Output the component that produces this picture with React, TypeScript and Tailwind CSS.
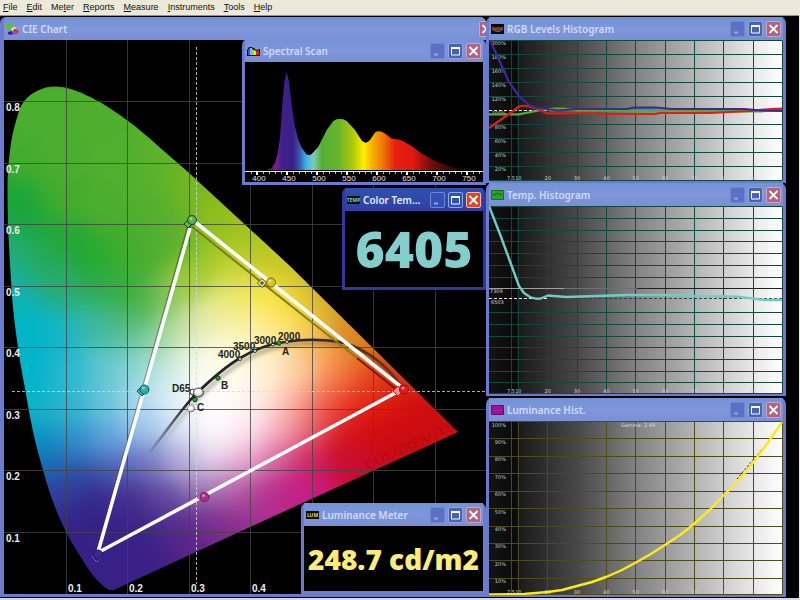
import type { ReactNode } from "react";

type WindowProps = {
  title: string;
  icon: ReactNode;
  active?: boolean;
  tucked?: boolean;
  className?: string;
  children: ReactNode;
};

type ButtonsProps = {
  active?: boolean;
  closeOnly?: boolean;
};

const WindowButtons = ({ active, closeOnly }: ButtonsProps) => {
  return (
    <div className="flex shrink-0 gap-[3px]">
      {!closeOnly && (
        <>
          <button
            aria-label="Minimize"
            className={`flex h-4 w-[15px] rounded-xs border ${
              active
                ? "border-[#6f88d4] bg-[#3150b4]"
                : "border-[#6f86ce] bg-[#5b72c4]"
            }`}
          >
            <svg viewBox="0 0 13 14" className="h-full w-full">
              <path d="M3 10.5h4" stroke="#8fa9ee" strokeWidth="2" />
            </svg>
          </button>
          <button
            aria-label="Maximize"
            className={`flex h-4 w-[15px] rounded-xs border ${
              active
                ? "border-[#8fa6e6] bg-[#3150b4]"
                : "border-[#8ea4de] bg-[#4a62b2]"
            }`}
          >
            <svg viewBox="0 0 13 14" className="h-full w-full">
              <path d="M2.5 4v7h8V4z" fill="none" stroke="#fff" />
              <path d="M2 4h9" stroke="#fff" strokeWidth="2" />
            </svg>
          </button>
        </>
      )}
      <button
        aria-label="Close"
        className={`flex h-4 w-[15px] rounded-xs border ${
          active
            ? "border-[#f0b8a8] bg-[#dc4528]"
            : "border-[#c9a4c4] bg-[#b06480]"
        }`}
      >
        <svg viewBox="0 0 13 14" className="h-full w-full">
          <path d="M2.5 3l8 8M10.5 3l-8 8" stroke="#fff" strokeWidth="1.8" />
        </svg>
      </button>
    </div>
  );
};

const Window = ({
  title,
  icon,
  active,
  tucked,
  className,
  children,
}: WindowProps) => {
  return (
    <section
      className={`flex flex-col rounded-t-md ${
        tucked ? "overflow-hidden border-l-4" : "border-x-3"
      } ${
        active
          ? "border-[#3038a0] bg-[#3038a0]"
          : "border-[#6a7ccb] bg-[#6a7ccb]"
      } ${className ?? ""}`}
    >
      <header
        className={`flex h-[23px] shrink-0 items-center gap-[3px] px-0.5 pt-px ${
          tucked ? "-mr-2.5" : ""
        } ${
          active
            ? "bg-linear-to-b from-[#2c50b0] via-[#3049a8] to-[#2f3f9e]"
            : "bg-linear-to-b from-[#7392d6] via-[#7f96da] to-[#7990d6]"
        }`}
      >
        {icon}
        <h2
          className={`min-w-0 flex-1 font-['Noto_Sans','Open_Sans',sans-serif] text-[10px] leading-4 font-semibold whitespace-nowrap ${
            active ? "text-[#e4ecfa]" : "text-[#cfdcf6]"
          }`}
        >
          {title}
        </h2>
        <WindowButtons active={active} closeOnly={tucked} />
      </header>
      {children}
    </section>
  );
};

const iconClass = "h-[11px] w-[13px] shrink-0";

const CieIcon = () => (
  <svg viewBox="0 0 13 11" className={iconClass}>
    <path d="M0 0h5l3 4-3 3L0 4z" fill="#5cc434" />
    <path d="M5 5l4-2 1 3-3 1z" fill="#fff" />
    <path d="M8 4l5 3.500-2 2-4-2.500z" fill="#e62a1c" />
    <path d="M2 8l4-1 1 3-3 1-2-1z" fill="#2c22a0" />
    <path d="M6 8l5 1-5 2z" fill="#b0309c" />
    <path d="M7 2l3 2-2 1z" fill="#f5ea40" />
  </svg>
);

const SpectralIcon = () => (
  <svg viewBox="0 0 13 11" className={iconClass}>
    <path d="M0 10V4l2-3h2l3 1 2 2 4-1v7z" fill="#101010" />
    <path d="M1 9V4l2-2v7z" fill="#6a3fc0" />
    <path d="M3 9V2h2v7z" fill="#5cc8e8" />
    <path d="M5 9V3l2 1v5z" fill="#8ed84c" />
    <path d="M7 9V4l2 1v4z" fill="#f6e234" />
    <path d="M9 9V5l3-1v5z" fill="#e02414" />
  </svg>
);

const RgbIcon = () => (
  <svg viewBox="0 0 13 11" className={iconClass}>
    <path d="M0 0h13v10H0z" fill="#0a0a0a" />
    <path d="M1 6q6-5 11 0" stroke="#4838c0" strokeWidth="1.500" fill="none" />
    <path d="M1 3q6 5 11 0" stroke="#e02818" strokeWidth="1.500" fill="none" />
    <path d="M1 5q6 5 11 0" stroke="#4fb02c" fill="none" />
  </svg>
);

const TempHistIcon = () => (
  <svg viewBox="0 0 13 11" className={iconClass}>
    <path d="M.5 .5h12v9H.5z" fill="#2aa428" stroke="#147014" />
    <path d="M2 5q4-3 9 0" stroke="#0e5c10" fill="none" />
  </svg>
);

const LumHistIcon = () => (
  <svg viewBox="0 0 13 11" className={iconClass}>
    <path d="M.5 .5h12v9H.5z" fill="#9c1296" stroke="#5e1068" />
    <path d="M1 8l4-3 3 1 4-4" stroke="#b0208c" fill="none" />
  </svg>
);

const TagIcon = ({ label, fill }: { label: string; fill: string }) => (
  <svg viewBox="0 0 13 11" className={iconClass}>
    <path d="M0 1h13v8H0z" fill="#0a0a0a" />
    <text x="6.5" y="7" fontSize="5" fontWeight="700" textAnchor="middle" fill={fill}>
      {label}
    </text>
  </svg>
);

// [x, y, r, g, b] anchors of the chromaticity fill
const anchors = [
  [20, 110, 76, 174, 46], [55, 95, 76, 174, 46], [100, 115, 78, 174, 46],
  [60, 150, 76, 174, 46], [20, 160, 66, 172, 46], [120, 160, 80, 175, 46],
  [160, 160, 92, 178, 42], [190, 185, 118, 182, 34], [12, 200, 24, 166, 58],
  [60, 200, 68, 172, 44], [110, 210, 76, 174, 46], [155, 205, 84, 176, 44],
  [220, 215, 142, 190, 28], [182, 240, 92, 176, 44], [30, 220, 26, 166, 60],
  [60, 240, 34, 168, 54], [90, 260, 34, 168, 50], [120, 250, 62, 172, 46],
  [150, 255, 78, 174, 48], [12, 250, 34, 172, 124], [40, 260, 36, 170, 96],
  [60, 285, 40, 172, 116], [15, 290, 18, 178, 178], [100, 290, 48, 172, 84],
  [130, 290, 54, 174, 56], [140, 310, 72, 178, 70], [165, 300, 132, 196, 92],
  [190, 280, 164, 204, 60], [210, 250, 158, 198, 36], [245, 240, 166, 196, 30],
  [235, 270, 206, 214, 56], [270, 260, 194, 198, 36], [300, 282, 202, 190, 40],
  [25, 330, 0, 180, 200], [60, 330, 18, 182, 198], [95, 325, 60, 184, 160],
  [125, 330, 84, 188, 146], [150, 340, 136, 208, 164], [175, 330, 192, 222, 166],
  [205, 320, 232, 236, 172], [230, 305, 238, 234, 130], [260, 295, 248, 232, 78],
  [285, 300, 252, 228, 60], [310, 320, 248, 206, 58], [325, 305, 204, 168, 40],
  [350, 328, 206, 140, 32], [250, 330, 253, 243, 166], [285, 330, 253, 230, 132],
  [30, 370, 0, 180, 202], [70, 370, 40, 184, 208], [105, 365, 96, 198, 206],
  [135, 370, 140, 212, 214], [165, 370, 200, 232, 228], [195, 360, 242, 247, 230],
  [225, 350, 254, 250, 218], [320, 350, 248, 180, 100], [345, 350, 242, 136, 50],
  [370, 350, 212, 112, 26], [395, 372, 206, 74, 22], [255, 375, 255, 246, 222],
  [270, 365, 254, 236, 200],
  [300, 370, 252, 206, 160], [335, 380, 244, 124, 80], [365, 380, 232, 74, 32],
  [385, 390, 224, 36, 20], [35, 410, 14, 178, 200], [70, 410, 50, 180, 206],
  [105, 405, 104, 196, 220], [140, 405, 172, 218, 238], [170, 400, 224, 240, 250],
  [200, 395, 255, 255, 255], [218, 372, 255, 254, 240], [225, 410, 255, 252, 252],
  [205, 418, 255, 252, 254],
  [235, 385, 255, 252, 244], [240, 412, 255, 244, 246],
  [270, 400, 253, 224, 216], [300, 405, 248, 164, 144], [330, 410, 236, 74, 56],
  [360, 410, 226, 26, 18], [400, 405, 212, 14, 14], [430, 420, 204, 12, 14],
  [452, 431, 206, 14, 16], [40, 445, 8, 142, 196], [75, 440, 46, 140, 204],
  [110, 440, 98, 162, 220], [145, 430, 158, 194, 234], [180, 425, 214, 226, 246],
  [215, 435, 253, 246, 252], [250, 430, 252, 222, 236], [285, 430, 246, 168, 184],
  [315, 430, 230, 80, 98], [345, 440, 208, 14, 24], [380, 440, 204, 12, 16],
  [400, 450, 202, 12, 20], [45, 470, 26, 98, 176], [75, 475, 44, 84, 172],
  [110, 470, 72, 92, 180], [145, 465, 112, 112, 190], [180, 460, 176, 170, 216],
  [210, 460, 228, 212, 236], [245, 460, 236, 176, 212], [275, 460, 216, 112, 164],
  [305, 460, 206, 40, 96], [340, 465, 202, 12, 50], [365, 470, 202, 12, 52],
  [55, 500, 52, 54, 148], [90, 495, 52, 34, 136], [130, 500, 66, 42, 140],
  [165, 500, 98, 74, 158], [200, 490, 152, 118, 184], [230, 490, 184, 110, 176],
  [260, 490, 178, 64, 150], [290, 490, 192, 30, 132], [315, 485, 202, 26, 130],
  [75, 535, 54, 32, 134], [110, 540, 56, 32, 136], [145, 530, 58, 34, 136],
  [180, 525, 84, 42, 140], [215, 520, 126, 50, 144], [250, 515, 160, 50, 144],
  [280, 505, 184, 40, 142], [105, 575, 56, 32, 134], [150, 565, 60, 32, 134],
  [190, 548, 88, 34, 136], [225, 535, 124, 38, 140],
];

const mixColor = (x: number, y: number) => {
  let r = 0,
    g = 0,
    b = 0,
    total = 0;
  for (const [ax, ay, ar, ag, ab] of anchors) {
    const d2 = (x - ax) ** 2 + (y - ay) ** 2;
    const w = Math.exp(-d2 / 420) + 1e-4 / (1 + d2);
    r += ar * w;
    g += ag * w;
    b += ab * w;
    total += w;
  }
  return `rgb(${Math.round(r / total)},${Math.round(g / total)},${Math.round(b / total)})`;
};

const CELL = 8;
const cells: { x: number; y: number; fill: string }[] = [];
for (let y = 76; y < 604; y += CELL) {
  for (let x = -8; x < 472; x += CELL) {
    cells.push({ x, y, fill: mixColor(x + CELL / 2, y + CELL / 2) });
  }
}

const locus =
  "M7.5 190C7.5 170 9 158 11 143C13 131 15 124 20 108C25 98 31 94 37 91C44 87 51 86 57 86.500C61 87 64 87 67 88C82 92 90 97 100 102C110 108 120 115 128 121C138 128 148 137 157 145C167 154 178 163 188 172L290 266L458 432L250 527L118 588C114 591 110 591 106 588C100 584 93 576 87 567C80 556 73 545 66 532C56 512 49 492 43 470C36 447 31 424 27 400C24 382 20 364 18 347C14 320 12 300 11 280C9 250 7.500 220 7.5 190Z";

const bodyCurve =
  "M149 453C163 436 176 416 193 397C207 383 224 367 242 357C254 350 268 344 285 342C303 339 325 339 345 343C366 350 386 364 401 386";

const axis = [0.1, 0.2, 0.3, 0.4, 0.5, 0.6, 0.7];

const tempPoints = [
  { label: "4000", x: 218, y: 358, cx: 240, cy: 359 },
  { label: "3500", x: 233, y: 350, cx: 255, cy: 351 },
  { label: "3000", x: 254, y: 344, cx: 273, cy: 344.5 },
  { label: "2000", x: 278, y: 340, cx: 287, cy: 342 },
];

const illuminants = [
  { label: "A", x: 282, y: 355, cx: 279, cy: 343 },
  { label: "B", x: 221, y: 389, cx: 218, cy: 378 },
  { label: "C", x: 197, y: 411, cx: 195, cy: 399.5 },
];

const CieChart = () => {
  return (
    <svg
      viewBox="4 40 482 554"
      role="img"
      aria-label="CIE chart"
      className="h-auto w-full bg-black font-['Liberation_Sans',Arial,sans-serif]"
    >
      <defs>
        <clipPath id="locus">
          <path d={locus} />
        </clipPath>
        <filter id="soft" x="-5%" y="-5%" width="110%" height="110%" colorInterpolationFilters="sRGB">
          <feGaussianBlur stdDeviation="7" />
        </filter>
        <filter id="shade" x="-20%" y="-20%" width="140%" height="140%">
          <feGaussianBlur stdDeviation="2" />
        </filter>
        <linearGradient id="body" gradientUnits="userSpaceOnUse" x1="149" y1="0" x2="402" y2="0">
          <stop offset="0" stopColor="#222" stopOpacity="0.1" />
          <stop offset="0.15" stopColor="#222" />
          <stop offset="0.75" stopColor="#2c2a28" />
          <stop offset="1" stopColor="#301c10" stopOpacity="0.5" />
        </linearGradient>
        <linearGradient id="bodyShade" gradientUnits="userSpaceOnUse" x1="149" y1="0" x2="402" y2="0">
          <stop offset="0" stopColor="#000" stopOpacity="0" />
          <stop offset="0.2" stopColor="#000" stopOpacity="0.4" />
          <stop offset="0.6" stopColor="#000" stopOpacity="0.4" />
          <stop offset="1" stopColor="#000" stopOpacity="0.1" />
        </linearGradient>
        <radialGradient id="pearl" cx="0.4" cy="0.35" r="0.7">
          <stop offset="0" stopColor="#fff" />
          <stop offset="0.6" stopColor="#e4e4e4" />
          <stop offset="1" stopColor="#777" />
        </radialGradient>
      </defs>

      <g clipPath="url(#locus)">
        <g filter="url(#soft)">
          {cells.map((c) => (
            <rect
              key={`${c.x}-${c.y}`}
              x={c.x}
              y={c.y}
              width={CELL + 1}
              height={CELL + 1}
              fill={c.fill}
            />
          ))}
        </g>
        <text
          transform="translate(367 470) rotate(-25)"
          fontSize="14"
          fontWeight="700"
          fill="#b60c12"
          className="font-['Liberation_Serif',serif]"
        >
          COLORFACTS
        </text>
      </g>

      <g stroke="#444" strokeOpacity="0.8" strokeWidth="1">
        {axis.map((v) => (
          <path key={v} d={`M${Math.round(4 + 615 * v)}.5 40V594`} />
        ))}
        {[...axis, 0.8].map((v) => (
          <path key={v} d={`M4 ${Math.round(593.4 - 615 * v)}.5H486`} />
        ))}
      </g>

      <path
        d="M196.500 47V584M12 391.500H486"
        stroke="#d8d8d8"
        strokeWidth="1"
        strokeDasharray="3 2"
        opacity="0.8"
      />

      <path
        d={bodyCurve}
        transform="translate(3 3)"
        fill="none"
        stroke="url(#bodyShade)"
        strokeWidth="3"
        filter="url(#shade)"
      />
      <path d={bodyCurve} fill="none" stroke="url(#body)" strokeWidth="2.600" />

      <path d="M190 225L290 305" stroke="#7f7a10" strokeWidth="2" />
      <path d="M290 305L357 358" stroke="#858010" strokeWidth="2" />
      <path d="M357 358L397 390" stroke="#8c1010" strokeWidth="2" />
      <path d="M189 226L97 555" stroke="#222" strokeOpacity="0.4" strokeWidth="4" />
      <path
        d="M190 228L98 552M99 552L397 392M400 386L195 222"
        stroke="#fff"
        strokeWidth="3.600"
        fill="none"
      />

      <g stroke="#1a3a1c" strokeWidth="1">
        <path d="M188 220l4 4-4 4-4-4z" fill="#5cb848" />
        <circle cx="192" cy="220" r="4.500" fill="#58b050" />
        <path d="M262 278.500l4.500 4.500-4.500 4.500-4.500-4.500z" fill="#f4ee90" stroke="#4a4a10" />
        <path d="M260 283h4M262 281v4" stroke="#222" />
        <circle cx="271" cy="282.500" r="4.500" fill="#dcc814" stroke="#68600c" />
        <path d="M142 386l5 5-5 5-5-5z" fill="#44b4b0" stroke="#0c6064" />
        <circle cx="144.500" cy="389.500" r="4.500" fill="#2cacac" stroke="#0c5c60" />
        <path d="M398 386l5 5-5 5-5-5z" fill="#f09088" stroke="#b02820" />
        <circle cx="404" cy="389.500" r="4.500" fill="#dc1c24" stroke="#901014" />
        <path d="M202 492l5 5-5 5-5-5z" fill="#d078b8" stroke="#a04890" />
        <circle cx="204.500" cy="497" r="4.500" fill="#b0308c" stroke="#701c60" />
        <path d="M97 552l5 5-5 5-5-5z" fill="none" stroke="#8080c8" strokeDasharray="2 1" />
        <circle cx="98" cy="554.500" r="4.500" fill="#3a2890" stroke="#201860" />
      </g>
      <g fill="#fff" fillOpacity="0.450">
        <circle cx="191" cy="218.500" r="1.500" />
        <circle cx="270" cy="281" r="1.500" />
        <circle cx="143.500" cy="388" r="1.500" />
        <circle cx="403" cy="388" r="1.500" />
        <circle cx="203.500" cy="495.500" r="1.500" />
      </g>

      <circle cx="193" cy="392" r="3" fill="url(#pearl)" stroke="#333" />
      <ellipse cx="198.500" cy="392.500" rx="5" ry="4.500" fill="url(#pearl)" stroke="#444" />
      <circle cx="191" cy="408.500" r="3.500" fill="url(#pearl)" stroke="#666" strokeWidth="0.500" />

      <g fontSize="10" fontWeight="700" fill="#222">
        {tempPoints.map((p) => (
          <g key={p.label}>
            <circle cx={p.cx} cy={p.cy} r="1.500" fill="#fff" stroke="#333" />
            <text x={p.x} y={p.y}>
              {p.label}
            </text>
          </g>
        ))}
        {illuminants.map((p) => (
          <g key={p.label}>
            <circle cx={p.cx} cy={p.cy} r="2.200" fill="#38a028" stroke="#0c3c0c" />
            <text x={p.x} y={p.y}>
              {p.label}
            </text>
          </g>
        ))}
        <text x="172" y="392">
          D65
        </text>
      </g>

      <g fontSize="10" fontWeight="700" fill="#ececec">
        {[...axis, 0.8].map((v) => (
          <text key={v} x="6" y={Math.round(603 - 615 * v)}>
            {v}
          </text>
        ))}
        {axis.slice(0, 4).map((v) => (
          <text key={v} x={Math.round(6 + 615 * v)} y="592">
            {v}
          </text>
        ))}
      </g>
    </svg>
  );
};

const SpectralChart = () => {
  return (
    <svg
      viewBox="0 0 238 120"
      role="img"
      aria-label="Spectral scan"
      className="h-auto w-full bg-black font-['Liberation_Sans',Arial,sans-serif]"
    >
      <defs>
        <linearGradient id="spectrum" gradientUnits="userSpaceOnUse" x1="0" y1="0" x2="240" y2="0">
          <stop offset="0.09" stopColor="#501458" />
          <stop offset="0.13" stopColor="#7a2090" />
          <stop offset="0.155" stopColor="#40208c" />
          <stop offset="0.2" stopColor="#3a2088" />
          <stop offset="0.225" stopColor="#3850a8" />
          <stop offset="0.255" stopColor="#36b4ee" />
          <stop offset="0.285" stopColor="#84c8b8" />
          <stop offset="0.32" stopColor="#52b034" />
          <stop offset="0.39" stopColor="#68b42c" />
          <stop offset="0.45" stopColor="#b0c808" />
          <stop offset="0.495" stopColor="#fff000" />
          <stop offset="0.53" stopColor="#f8b000" />
          <stop offset="0.58" stopColor="#f07008" />
          <stop offset="0.625" stopColor="#e82010" />
          <stop offset="0.7" stopColor="#e01810" />
          <stop offset="0.78" stopColor="#700c08" />
          <stop offset="0.9" stopColor="#280404" />
        </linearGradient>
      </defs>
      <path
        d="M21 108L26.700 106L30 101L32.700 91L35 76L37.300 43L39.300 20L41.700 9.700L44 20L46.700 43L50 65L53.300 78L56.700 86L61.700 92.500Q64 93.500 66.700 92L73.300 84.700L81.700 68L88.300 59Q95 54.500 101.700 59L110 68L116.700 78.500Q120.700 83 125 78L130 70.500Q134.300 67.500 140 71.500L146.700 76.500L155 77.700L165 83L176.700 91.500L191.700 99.700L208 105.700L228 107.500V108Z"
        fill="url(#spectrum)"
      />
      <path d="M0 109.500H240" stroke="#e8e8e8" />
      <path d="M6 111H240" stroke="#bbb" strokeWidth="2" strokeDasharray="1 5" />
      <g fontSize="8" fill="#e0e0e0" textAnchor="middle">
        {[400, 450, 500, 550, 600, 650, 700, 750].map((nm, i) => (
          <g key={nm}>
            <path d={`M${12 + 30 * i} 109v4`} stroke="#fff" strokeWidth="2" />
            <text x={14 + 30 * i} y="119">
              {nm}
            </text>
          </g>
        ))}
      </g>
    </svg>
  );
};

type HistogramProps = {
  label: string;
  height: number;
  rows: number[];
  gridColor: string;
  children: ReactNode;
};

const Histogram = ({ label, height, rows, gridColor, children }: HistogramProps) => {
  const columns = [0.75, 1, 2, 3, 4, 5, 6, 7, 8, 9];

  return (
    <svg
      viewBox={`0 0 294 ${height}`}
      role="img"
      aria-label={label}
      className="h-auto w-full font-['DejaVu_Sans',sans-serif]"
    >
      <defs>
        <linearGradient id="ramp">
          <stop offset="0" stopColor="#141414" />
          <stop offset="0.09" stopColor="#0a0a0a" />
          <stop offset="0.11" stopColor="#1c1c1c" />
          <stop offset="0.3" stopColor="#484848" />
          <stop offset="0.5" stopColor="#828282" />
          <stop offset="0.7" stopColor="#b4b4b4" />
          <stop offset="0.9" stopColor="#e8e8e8" />
          <stop offset="1" stopColor="#ffffff" />
        </linearGradient>
      </defs>
      <rect width="294" height={height} fill="url(#ramp)" />
      <g stroke={gridColor} strokeWidth="1">
        {columns.map((c) => (
          <path key={c} d={`M${Math.floor(29.35 * c)}.5 0V${height}`} />
        ))}
        {rows.map((y) => (
          <path key={y} d={`M0 ${y}.5H294`} />
        ))}
        <path d={`M0 .5H293.500V${height - 0.5}H0`} fill="none" />
      </g>
      <g fontSize="5" fill="#d4d4d4" textAnchor="middle">
        {columns.map((c) => (
          <text key={c} x={29.35 * c} y={height - 1}>
            {c * 10}
          </text>
        ))}
      </g>
      {children}
    </svg>
  );
};

const RgbHistogram = () => {
  return (
    <Histogram
      label="RGB levels histogram"
      height={141}
      rows={[14, 28, 42, 56, 84, 98, 112, 126]}
      gridColor="#14483f"
    >
      <g fontSize="5" fill="#c8c8c8" textAnchor="end">
        {[200, 180, 160, 140, 120, 100, 80, 60, 40, 20].map((p, i) => (
          <text key={p} x="17" y={5 + 14 * i}>
            {p}%
          </text>
        ))}
      </g>
      <path d="M0 70.500H60" stroke="#eee" strokeDasharray="3 2" />
      <path d="M60 70.500H293" stroke="#2c9c98" strokeWidth="2" />
      <g fill="none" strokeWidth="2.200" strokeLinejoin="round">
        <path
          d="M0 74.300H30L42 72L52 70L65 68.700H75L88 70.500H140L145 71.500H172L185 70.500L228 71.300H272L293 70"
          stroke="#54b02c"
        />
        <path
          d="M0 88L10 81L20 74L30 66.500Q35 65 40 66.500L50 69.500L58 73.300H75L88 73H108L110 74H167L170 73H222L240 72L262 71L275 69.500L293 68.700"
          stroke="#e41c14"
        />
        <path
          d="M1 0L10 20L20 42L30 56L40 65L46 67.500L58 69L70 70.500L88 69H138L145 67.700L167 67.500L182 69H255L272 70.500L293 71"
          stroke="#3c2898"
        />
      </g>
    </Histogram>
  );
};

const TempHistogram = () => {
  return (
    <Histogram
      label="Temperature histogram"
      height={188}
      rows={[12, 24, 35, 47, 59, 71, 106, 118, 130, 141, 153, 165, 176]}
      gridColor="#14483f"
    >
      <path d="M0 82.500H75" stroke="#a0a0a0" />
      <path d="M75 82.500H148" stroke="#707070" />
      <path d="M148 82.500H294" stroke="#1c2020" />
      <path d="M0 92.500H60" stroke="#eee" strokeDasharray="3 2" />
      <path d="M60 92.500H294" stroke="#30403c" strokeDasharray="3 2" />
      <g fontSize="5" fill="#d4d4d4">
        <text x="1" y="87">
          7309
        </text>
        <text x="2" y="98">
          6503
        </text>
      </g>
      <path
        d="M0 0L11.700 30L30 80L35 87L41 91Q49 94 53 92L59 89.500L77 91L108 90L138 89H195L208 90.300L248 90.700L262 92.300L275 94H293"
        fill="none"
        stroke="#70ccc8"
        strokeWidth="2.400"
        strokeLinejoin="round"
      />
    </Histogram>
  );
};

const LuminanceHistogram = () => {
  return (
    <Histogram
      label="Luminance histogram"
      height={174}
      rows={[17, 35, 52, 70, 87, 105, 122, 139, 157]}
      gridColor="#4c4c18"
    >
      <g fontSize="5" fill="#c8c8c8" textAnchor="end">
        {[100, 90, 80, 70, 60, 50, 40, 30, 20, 10].map((p, i) => (
          <text key={p} x="17" y={Math.round(5.5 + 17.4 * i)}>
            {p}%
          </text>
        ))}
      </g>
      <text x="149" y="5.500" fontSize="5" fill="#dcdcdc" textAnchor="middle">
        Gamma: 2.49
      </text>
      <path d="M248 58L263 40L280 20" stroke="#222" strokeDasharray="2 2" fill="none" />
      <path
        d="M0 173.500L35 173L59 171L73 169L88 165L103 161L117 156L132 149.500L146 142L161 133.500L176 124L191 114L205 103L220 89.500L234 75L249 60L263 43L278 23L293 1"
        fill="none"
        stroke="#fcec10"
        strokeWidth="2.400"
        strokeLinejoin="round"
      />
    </Histogram>
  );
};

const menuItems = [
  ["", "F", "ile"],
  ["", "E", "dit"],
  ["Me", "t", "er"],
  ["", "R", "eports"],
  ["", "M", "easure"],
  ["", "I", "nstruments"],
  ["", "T", "ools"],
  ["", "H", "elp"],
];

const App = () => {
  return (
    <div className="flex min-h-screen flex-col border-r border-[#e8e8e8] bg-[#d8d8d8]">
      <nav className="flex h-4 items-center gap-[9px] border-b border-[#94928a] bg-[#ece9d8] px-[3px] pb-0.5 font-['Liberation_Sans',Arial,sans-serif] text-[9px] leading-3 text-[#111]">
        {menuItems.map(([before, key, after]) => (
          <button key={before + key + after}>
            {before}
            <u>{key}</u>
            {after}
          </button>
        ))}
      </nav>

      <main className="flex flex-1 bg-black pt-px pb-px">
        <div className="relative min-w-0 flex-[486]">
          <Window title="CIE Chart" icon={<CieIcon />} tucked className="pb-[3px]">
            <CieChart />
          </Window>

          <Window
            title="Spectral Scan"
            icon={<SpectralIcon />}
            className="absolute top-[22px] right-0 w-[244px] pb-[3px]"
          >
            <SpectralChart />
          </Window>

          <Window
            title="Color Tem..."
            icon={<TagIcon label="TEMP" fill="#6cd4d0" />}
            active
            className="absolute top-[171px] right-0 w-36 pb-[3px]"
          >
            <p className="flex h-[76px] items-center justify-center bg-black font-['Open_Sans',sans-serif] text-[50px] leading-none font-extrabold text-[#84cfcc]">
              6405
            </p>
          </Window>

          <Window
            title="Luminance Meter"
            icon={<TagIcon label="LUM" fill="#e8d840" />}
            className="absolute right-0 bottom-[3px] w-[185px] pb-[3px]"
          >
            <p className="flex h-[65px] items-center justify-center bg-black font-['Open_Sans',sans-serif] text-[28px] leading-none font-extrabold whitespace-nowrap text-[#fcec78]">
              248.7 cd/m2
            </p>
          </Window>
        </div>

        <div className="relative min-w-0 flex-[300]">
          <Window title="RGB Levels Histogram" icon={<RgbIcon />} className="pb-0.5">
            <RgbHistogram />
          </Window>
          <Window title="Temp. Histogram" icon={<TempHistIcon />} className="pb-0.5">
            <TempHistogram />
          </Window>
          <Window
            title="Luminance Hist."
            icon={<LumHistIcon />}
            className="mt-0.5 pb-0.5"
          >
            <LuminanceHistogram />
          </Window>
        </div>
        <div className="flex-[13]" />
      </main>
      <div className="h-0.5" />
    </div>
  );
};

export default App;
